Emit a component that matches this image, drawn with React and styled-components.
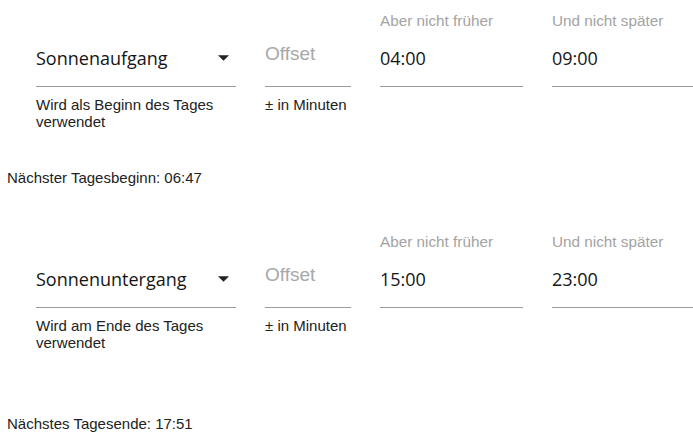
import styled, { createGlobalStyle } from "styled-components";

const GlobalStyle = createGlobalStyle`
  html, body {
    margin: 0;
    padding: 0;
    background: #fff;
    overflow: hidden;
  }
  body {
    font-family: "Liberation Sans", Arial, sans-serif;
  }
`;

const Page = styled.div`
  width: 693px;
  height: 442px;
  padding-left: 7px;
  box-sizing: border-box;
  overflow: hidden;
`;

const Section = styled.section`
  padding-top: ${(p) => p.top}px;
`;

const FieldsRow = styled.div`
  display: flex;
  align-items: flex-start;
  gap: 29px;
  padding-left: 29px;
`;

const Field = styled.div`
  display: flex;
  flex-direction: column;
  width: ${(p) => p.width}px;
  flex-shrink: 0;
`;

const Label = styled.div`
  height: 16px;
  font-size: 15.3px;
  line-height: 16px;
  color: #a3a3a3;
  white-space: nowrap;
`;

const InputBox = styled.div`
  position: relative;
  height: 58px;
  border-bottom: 1px solid #9a9a9a;
  display: flex;
  align-items: flex-end;
  box-sizing: border-box;
`;

const Value = styled.div`
  font-family: "Open Sans", "Liberation Sans", sans-serif;
  font-size: 18px;
  line-height: 24px;
  color: #151515;
  margin-bottom: 16px;
  flex: 1;
`;

const Placeholder = styled.div`
  font-size: 19px;
  line-height: 24px;
  color: #a8a8a8;
  margin-bottom: 20px;
`;

const Arrow = styled.svg`
  position: absolute;
  right: 7px;
  bottom: 25px;
`;

const Helper = styled.div`
  margin-top: 9px;
  font-size: 15px;
  line-height: 17px;
  color: #222;
`;

const Summary = styled.div`
  margin-top: ${(p) => p.top}px;
  font-size: 15px;
  line-height: 17px;
  color: #222;
`;

function Block({ top, select, helper, from, to, summary, summaryTop }) {
  return (
    <Section top={top}>
      <FieldsRow>
        <Field width={200}>
          <Label />
          <InputBox>
            <Value>{select}</Value>
            <Arrow width="11" height="6" viewBox="0 0 10 5">
              <path d="M0 0l5 5 5-5z" fill="#222" />
            </Arrow>
          </InputBox>
          <Helper>{helper}</Helper>
        </Field>
        <Field width={86}>
          <Label />
          <InputBox>
            <Placeholder>Offset</Placeholder>
          </InputBox>
          <Helper>± in Minuten</Helper>
        </Field>
        <Field width={143}>
          <Label>Aber nicht früher</Label>
          <InputBox>
            <Value>{from}</Value>
          </InputBox>
        </Field>
        <Field width={143}>
          <Label>Und nicht später</Label>
          <InputBox>
            <Value>{to}</Value>
          </InputBox>
        </Field>
      </FieldsRow>
      <Summary top={summaryTop}>{summary}</Summary>
    </Section>
  );
}

export default function App() {
  return (
    <>
      <GlobalStyle />
      <Page>
        <Block
          top={13}
          select="Sonnenaufgang"
          helper="Wird als Beginn des Tages verwendet"
          from="04:00"
          to="09:00"
          summary="Nächster Tagesbeginn: 06:47"
          summaryTop={39}
        />
        <Block
          top={48}
          select="Sonnenuntergang"
          helper="Wird am Ende des Tages verwendet"
          from="15:00"
          to="23:00"
          summary="Nächstes Tagesende: 17:51"
          summaryTop={64}
        />
      </Page>
    </>
  );
}
